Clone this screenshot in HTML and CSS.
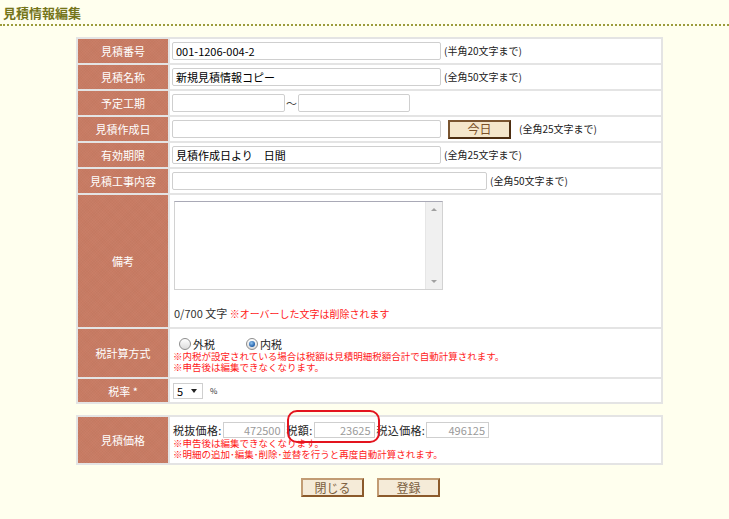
FILE: index.html
```html
<!DOCTYPE html>
<html lang="ja">
<head>
<meta charset="utf-8">
<title>見積情報編集</title>
<link rel="stylesheet" href="styles.css">
</head>
<body>
<h1 class="page-title">見積情報編集</h1>

<table class="form-table">
  <tr class="r">
    <th>見積番号</th>
    <td><div class="line"><input class="in w269" value="001-1206-004-2"><span class="note">(半角20文字まで)</span></div></td>
  </tr>
  <tr class="r">
    <th>見積名称</th>
    <td><div class="line"><input class="in w269" value="新規見積情報コピー"><span class="note">(全角50文字まで)</span></div></td>
  </tr>
  <tr class="r">
    <th>予定工期</th>
    <td><div class="line"><input class="in w113" value=""><span class="tilde">～</span><input class="in w112" value=""></div></td>
  </tr>
  <tr class="r">
    <th>見積作成日</th>
    <td><div class="line"><input class="in w269" value=""><button class="today" type="button">今日</button><span class="note note-far">(全角25文字まで)</span></div></td>
  </tr>
  <tr class="r">
    <th>有効期限</th>
    <td><div class="line"><input class="in w269" value="見積作成日より　日間"><span class="note">(全角25文字まで)</span></div></td>
  </tr>
  <tr class="r">
    <th>見積工事内容</th>
    <td><div class="line"><input class="in w315" value=""><span class="note">(全角50文字まで)</span></div></td>
  </tr>
  <tr class="r-memo">
    <th>備考</th>
    <td class="memo-cell">
      <div class="memo-box">
        <textarea class="memo"></textarea>
        <div class="vscroll"><span class="arr up"></span><span class="arr down"></span></div>
      </div>
      <div class="counter">0/700 文字 <span class="red">※オーバーした文字は削除されます</span></div>
    </td>
  </tr>
  <tr class="r-tax">
    <th>税計算方式</th>
    <td class="tax-cell">
      <div class="radios">
        <span class="radio-item"><span class="radio"></span>外税</span>
        <span class="radio-item"><span class="radio on"></span>内税</span>
      </div>
      <div class="small-red">※内税が設定されている場合は税額は見積明細税額合計で自動計算されます。</div>
      <div class="small-red">※申告後は編集できなくなります。</div>
    </td>
  </tr>
  <tr class="r-rate">
    <th>税率 *</th>
    <td><div class="line"><span class="sel">5<span class="caret"></span></span><span class="pct">%</span></div></td>
  </tr>
</table>

<table class="form-table price-table">
  <tr class="r-price">
    <th>見積価格</th>
    <td class="price-cell">
      <div class="line price-line">
        <span class="plabel">税抜価格:</span><input class="pin w62" value="472500" readonly>
        <span class="plabel">税額:</span><input class="pin w61" value="23625" readonly>
        <span class="plabel">税込価格:</span><input class="pin w63" value="496125" readonly>
      </div>
      <div class="small-red">※申告後は編集できなくなります。</div>
      <div class="small-red">※明細の追加･編集･削除･並替を行うと再度自動計算されます。</div>
      <span class="mark"></span>
    </td>
  </tr>
</table>

<div class="actions">
  <button class="btn" type="button">閉じる</button>
  <button class="btn" type="button">登録</button>
</div>
</body>
</html>
```

FILE: styles.css
```css
* { box-sizing: border-box; }
html, body { margin: 0; padding: 0; }
body {
  background: #ffffee;
  font-family: "Noto Sans CJK JP", "Noto Sans", sans-serif;
  font-size: 11px;
  color: #000;
  min-height: 519px;
}

.page-title {
  margin: 0;
  height: 26px;
  padding: 5px 0 0 3px;
  font-size: 13px;
  line-height: 15px;
  font-weight: bold;
  color: #75751a;
  border-bottom: 2px dotted #9c9c3c;
}

.form-table {
  margin: 11px 0 0 76px;
  width: 587px;
  border-collapse: separate;
  border-spacing: 2px;
  background: #e4e4e4;
}
.form-table th {
  width: 90px;
  padding: 0;
  font-weight: normal;
  font-size: 11px;
  line-height: 14px;
  color: #fff;
  text-align: center;
  vertical-align: middle;
  background-color: #c87b63;
  background-image:
    repeating-linear-gradient(45deg, rgba(255,255,255,0.025) 0 1px, transparent 1px 2px),
    repeating-linear-gradient(-45deg, rgba(0,0,0,0.02) 0 1px, transparent 1px 2px);
}
.form-table td {
  background: #fff;
  padding: 0 0 0 2px;
  vertical-align: middle;
  white-space: nowrap;
}
.r th, .r td { height: 24px; }
.r-memo th, .r-memo td { height: 132px; }
.r-tax th, .r-tax td { height: 48px; }
.r-rate th, .r-rate td { height: 23px; }

.line { display: flex; align-items: center; }

.in {
  margin: 0;
  height: 18px;
  padding: 0 3px;
  border: 1px solid #cfcfcf;
  border-radius: 2px;
  background: #fff;
  font: 11px/16px "Noto Sans CJK JP", sans-serif;
  color: #000;
}
.w269 { width: 269px; }
.w113 { width: 113px; }
.w112 { width: 112px; }
.w315 { width: 315px; }

.note {
  margin-left: 3px;
  font-size: 10px;
  line-height: 14px;
  color: #222;
}
.note-far { margin-left: 8px; }
.tilde { width: 13px; text-align: center; font-size: 11px; color: #444; }

.today {
  margin: 0 0 0 7px;
  width: 63px;
  height: 19px;
  padding: 0;
  background: #f4e6cb;
  border: 2px solid #4d2e12;
  border-top-color: #7a5530;
  border-left-color: #7a5530;
  font: 12px/14px "Noto Sans CJK JP", sans-serif;
  color: #7a5028;
}

/* memo */
.memo-cell { vertical-align: top !important; padding: 6px 0 0 4px !important; }
.memo-box {
  display: flex;
  width: 269px;
  height: 89px;
  border: 1px solid #d2d2d2;
  border-top-color: #a9a9b6;
  background: #fff;
}
.memo {
  flex: 1;
  margin: 0;
  border: 0;
  padding: 2px;
  resize: none;
  outline: none;
  background: #fff;
  font: 11px "Noto Sans CJK JP", sans-serif;
}
.vscroll {
  width: 17px;
  background: #f0f0f0;
  border-left: 1px solid #e6e6e6;
  display: flex;
  flex-direction: column;
  justify-content: space-between;
  align-items: center;
  padding: 6px 0;
}
.arr { width: 0; height: 0; border-left: 3px solid transparent; border-right: 3px solid transparent; }
.arr.up { border-bottom: 3px solid #a0a0a0; }
.arr.down { border-top: 3px solid #a0a0a0; }
.counter {
  margin-top: 17px;
  font-size: 11px;
  line-height: 12px;
  color: #333;
}
.red { color: #ff1a1a; font-size: 10px; }

/* tax */
.tax-cell { vertical-align: top !important; padding: 7px 0 0 3px !important; }
.radios { display: flex; height: 15px; align-items: center; padding-left: 6px; }
.radio-item { display: flex; align-items: center; gap: 2px; font-size: 11px; line-height: 14px; color: #222; }
.radio-item + .radio-item { margin-left: 31px; }
.radio {
  position: relative;
  width: 12px;
  height: 12px;
  border: 1px solid #8d8d8d;
  border-radius: 50%;
  background: linear-gradient(#ffffff, #dcdcdc);
}
.radio.on::after {
  content: "";
  position: absolute;
  left: 2px; top: 2px;
  width: 6px; height: 6px;
  border-radius: 50%;
  background: radial-gradient(circle at 40% 35%, #8fc3f0, #1f5ea8 70%);
}
.small-red {
  font-family: "Liberation Sans", "Noto Sans CJK JP", sans-serif;
  font-size: 9.5px;
  line-height: 11px;
  color: #ff1a1a;
}

/* rate */
.sel {
  display: flex;
  align-items: center;
  justify-content: space-between;
  width: 30px;
  height: 16px;
  margin-left: 1px;
  padding: 0 5px 0 3px;
  border: 1px solid #cfcfcf;
  font-size: 11px;
  line-height: 14px;
  background: #fff;
}
.caret { width: 0; height: 0; border-left: 3px solid transparent; border-right: 3px solid transparent; border-top: 4px solid #222; }
.pct { margin-left: 7px; font-size: 8px; color: #333; }

/* price */
.price-table { margin-top: 11px; }
.r-price th, .r-price td { height: 46px; }
.price-cell { position: relative; vertical-align: top !important; padding: 4px 0 0 3px !important; }
.price-line { height: 17px; }
.plabel { font-size: 11px; line-height: 14px; color: #222; letter-spacing: 0.3px; }
.pin {
  margin: 0 2px 0 1px;
  height: 16px;
  padding: 0 3px;
  border: 1px solid #cfcfcf;
  background: #fff;
  text-align: right;
  font: 11px/14px "Noto Sans CJK JP", sans-serif;
  color: #9a9a9a;
}
.w62 { width: 62px; }
.w61 { width: 61px; }
.w63 { width: 63px; }
.mark {
  position: absolute;
  left: 117px;
  top: -7px;
  width: 93px;
  height: 33px;
  border: 2px solid #e3141e;
  border-radius: 10px;
  pointer-events: none;
}

.actions {
  display: flex;
  gap: 13px;
  margin: 13px 0 0 301px;
}
.btn {
  margin: 0;
  width: 63px;
  height: 19px;
  padding: 0;
  background: #f5ebd8;
  border: 2px solid #8b5a2b;
  border-top-color: #c29c74;
  border-left-color: #c29c74;
  font: 12px/14px "Noto Sans CJK JP", sans-serif;
  color: #7b6040;
}
```
